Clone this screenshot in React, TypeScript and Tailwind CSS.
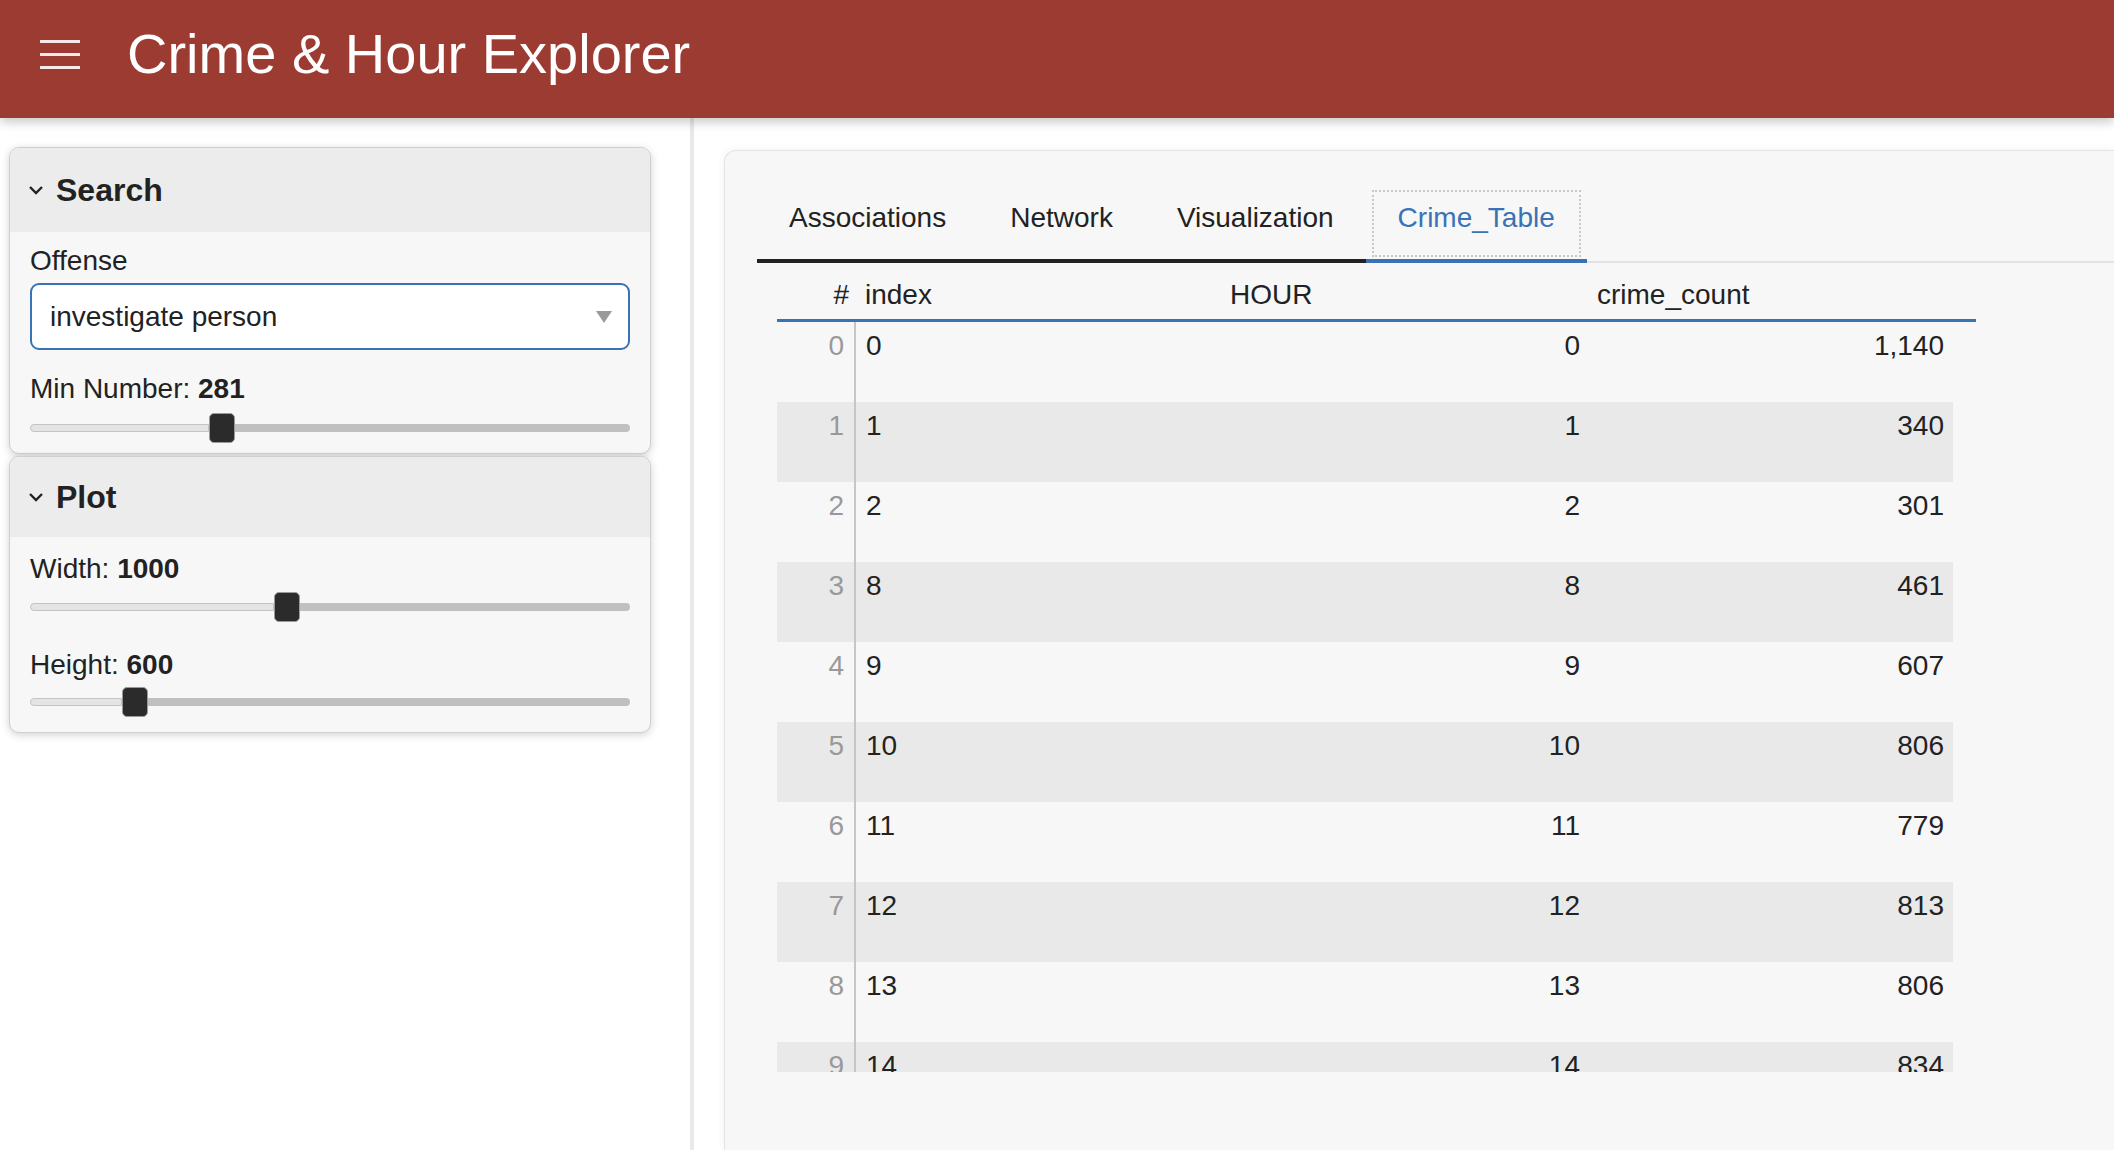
const tabs = ["Associations", "Network", "Visualization", "Crime_Table"];

const rows = [
  { index: 0, hour: 0, count: "1,140" },
  { index: 1, hour: 1, count: "340" },
  { index: 2, hour: 2, count: "301" },
  { index: 8, hour: 8, count: "461" },
  { index: 9, hour: 9, count: "607" },
  { index: 10, hour: 10, count: "806" },
  { index: 11, hour: 11, count: "779" },
  { index: 12, hour: 12, count: "813" },
  { index: 13, hour: 13, count: "806" },
  { index: 14, hour: 14, count: "834" },
];

function Chevron() {
  return (
    <svg width="16" height="10" viewBox="0 0 16 10" className="shrink-0">
      <polyline points="2,2 8,8 14,2" fill="none" stroke="#222" strokeWidth="2.4" />
    </svg>
  );
}

function Slider({ fill }: { fill: string }) {
  return (
    <div className="flex items-center h-[32px]">
      <div className={`${fill} h-[8px] rounded-l-full bg-[#e4e4e4] border border-[#c4c4c4]`} />
      <div className="w-[26px] h-[30px] rounded-[5px] bg-[#2b2b2b] border border-[#9a9a9a] shrink-0" />
      <div className="flex-1 h-[8px] rounded-r-full bg-[#c0c0c0]" />
    </div>
  );
}

function CardHeader({ title, tall }: { title: string; tall?: boolean }) {
  return (
    <div className={`${tall ? "h-[84px]" : "h-[80px]"} bg-[#ececec] rounded-t-[10px] flex items-center gap-[12px] pl-[18px]`}>
      <Chevron />
      <span className="text-[32px] font-bold text-[#222]">{title}</span>
    </div>
  );
}

export default function App() {
  return (
    <div className="h-[1150px] overflow-hidden bg-white flex flex-col text-[28px] text-[#222]" style={{ fontFamily: '"Liberation Sans", Arial, sans-serif' }}>
      {/* Header */}
      <header className="relative z-10 h-[118px] shrink-0 bg-[#9c3b31] shadow-[0_4px_10px_rgba(0,0,0,0.22)] flex items-center pb-[10px]">
        <div className="ml-[40px] w-[40px] flex flex-col gap-[10px]">
          <div className="h-[3px] bg-[#f6e9e6]" />
          <div className="h-[3px] bg-[#f6e9e6]" />
          <div className="h-[3px] bg-[#f6e9e6]" />
        </div>
        <h1 className="ml-[47px] text-[56px] text-white leading-none">Crime &amp; Hour Explorer</h1>
      </header>

      <div className="flex flex-1 min-h-0">
        {/* Sidebar */}
        <aside className="w-[694px] shrink-0 border-r-4 border-[#e9e9e9] pl-[9px] pr-[39px] pt-[29px] flex flex-col gap-[2px]">
          <div className="rounded-[10px] border border-[#cfcfcf] bg-[#f7f7f7] shadow-[0_2px_8px_rgba(0,0,0,0.18)]">
            <CardHeader title="Search" tall />
            <div className="px-[20px] pt-[13px] pb-[9px]">
              <div className="leading-[32px]">Offense</div>
              <div className="mt-[6px] h-[67px] rounded-[9px] border-2 border-[#3a73b5] bg-white flex items-center pl-[18px] pr-[16px]">
                <span className="flex-1">investigate person</span>
                <svg width="16" height="12" viewBox="0 0 16 12">
                  <polygon points="0,0 16,0 8,12" fill="#9a9a9a" />
                </svg>
              </div>
              <div className="mt-[23px] leading-[32px]">
                Min Number: <b>281</b>
              </div>
              <div className="mt-[7px]">
                <Slider fill="w-[179px]" />
              </div>
            </div>
          </div>

          <div className="rounded-[10px] border border-[#cfcfcf] bg-[#f7f7f7] shadow-[0_2px_8px_rgba(0,0,0,0.18)]">
            <CardHeader title="Plot" />
            <div className="px-[20px] pt-[16px] pb-[14px]">
              <div className="leading-[32px]">
                Width: <b>1000</b>
              </div>
              <div className="mt-[6px]">
                <Slider fill="w-[244px]" />
              </div>
              <div className="mt-[26px] leading-[32px]">
                Height: <b>600</b>
              </div>
              <div className="mt-[5px]">
                <Slider fill="w-[92px]" />
              </div>
            </div>
          </div>
        </aside>

        {/* Main */}
        <main className="flex-1 pl-[30px] pt-[32px] min-w-0">
          <div className="h-full rounded-tl-[12px] border-l border-t border-[#e4e4e4] bg-[#f7f7f7] shadow-[0_0_8px_rgba(0,0,0,0.06)] pl-[32px] pt-[33px]">
            {/* Tabs */}
            <div className="flex items-end">
              {tabs.map((t) => {
                const active = t === "Crime_Table";
                return (
                  <div
                    key={t}
                    className={
                      active
                        ? "h-[79px] px-[32px] pb-[8px] flex items-center border-b-4 border-[#3a73b5] text-[#3a73b5] outline-2 outline-dotted outline-[#c8c8c8] outline-offset-[-8px]"
                        : "h-[79px] px-[32px] pb-[8px] flex items-center border-b-4 border-[#222]"
                    }
                  >
                    {t}
                  </div>
                );
              })}
              <div className="flex-1 border-b-2 border-[#e3e3e3]" />
            </div>

            {/* Table */}
            <div className="ml-[20px] w-[1199px]">
              <div className="h-[59px] border-b-[3px] border-[#3a73b5] grid grid-cols-[79px_364px_370px_363px] items-end pb-[3px]">
                <div className="text-right pr-[7px]">#</div>
                <div className="pl-[9px]">index</div>
                <div className="pl-[10px]">HOUR</div>
                <div className="pl-[7px]">crime_count</div>
              </div>
              <div className="h-[750px] overflow-hidden">
                {rows.map((r, i) => (
                  <div
                    key={i}
                    className={`h-[80px] w-[1176px] grid grid-cols-[79px_364px_370px_363px] ${i % 2 === 1 ? "bg-[#e9e9e9]" : "bg-[#f7f7f7]"}`}
                  >
                    <div className="text-right pr-[10px] pt-[3px] text-[#999] border-r-2 border-[#c6c6c6]">{i}</div>
                    <div className="pl-[10px] pt-[3px]">{r.index}</div>
                    <div className="text-right pr-[10px] pt-[3px]">{r.hour}</div>
                    <div className="text-right pr-[9px] pt-[3px]">{r.count}</div>
                  </div>
                ))}
              </div>
            </div>
          </div>
        </main>
      </div>
    </div>
  );
}
